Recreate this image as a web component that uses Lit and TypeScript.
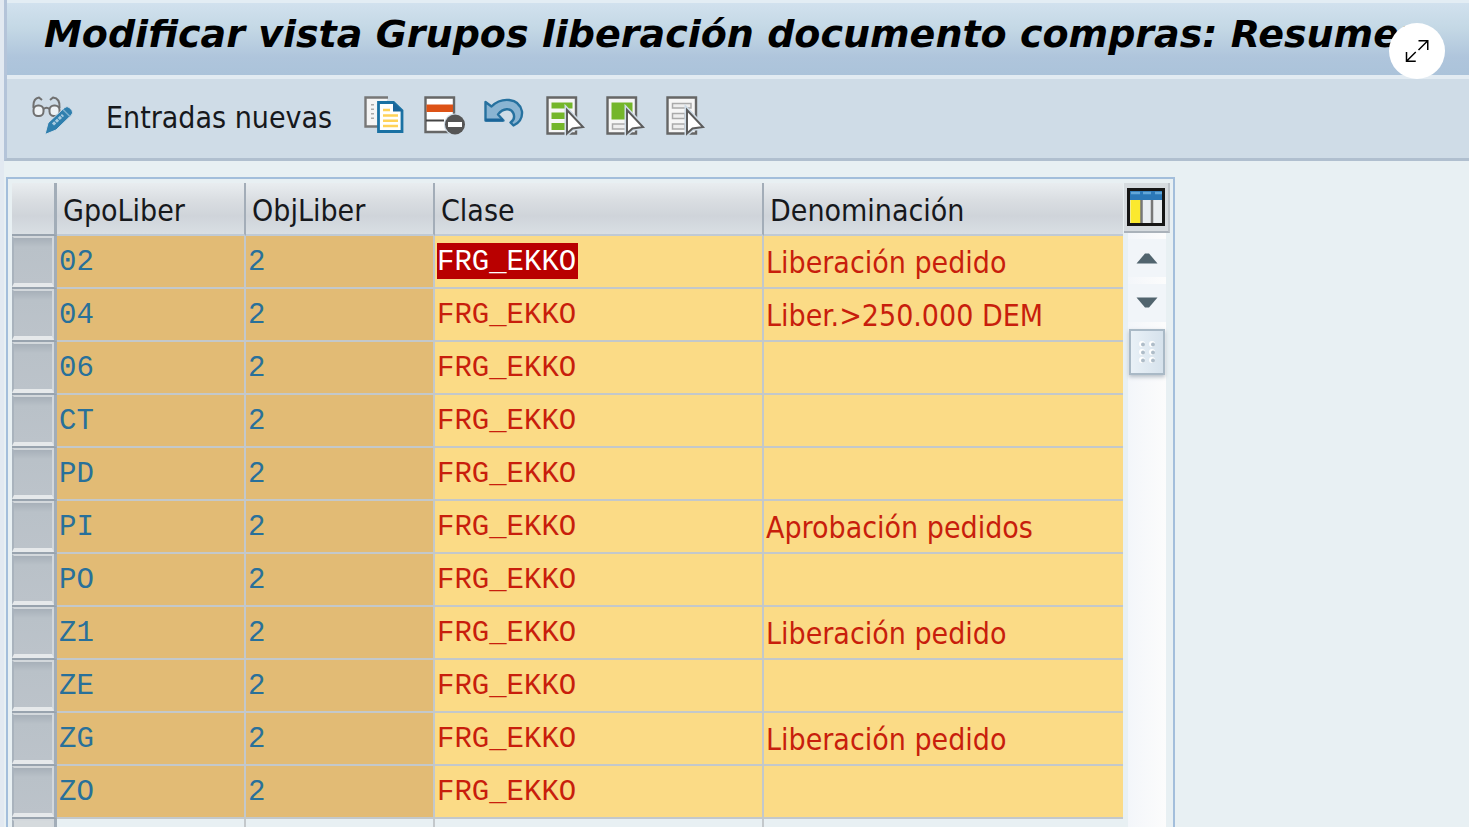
import { LitElement, html, css, svg } from "lit";
import { customElement, state } from "lit/decorators.js";

interface ReleaseGroup {
  group: string;
  object: string;
  cls: string;
  text: string;
}

const GROUPS: ReleaseGroup[] = [
  ["02", "Liberación pedido"],
  ["04", "Liber.>250.000 DEM"],
  ["06", ""],
  ["CT", ""],
  ["PD", ""],
  ["PI", "Aprobación pedidos"],
  ["PO", ""],
  ["Z1", "Liberación pedido"],
  ["ZE", ""],
  ["ZG", "Liberación pedido"],
  ["ZO", ""],
].map(([group, text]) => ({ group, object: "2", cls: "FRG_EKKO", text }));

const cursor = svg`<path d="M21 14V37.5L26.5 32.5L37 31Z" fill="#fff" stroke="#cfdce7" stroke-width="5"/>
  <path d="M21 14V37.5L26.5 32.5L37 31Z" fill="#fff" stroke="#5c5c5c" stroke-width="2"/>`;
const sheet = svg`<path d="M1.5 1.5H30V37.5H1.5Z" fill="#f6f6f6" stroke="#666" stroke-width="2.4"/>`;

const icons = {
  toggle: svg`<svg viewBox="0 0 42 40" width="42" height="40">
    <g fill="none" stroke="#707070" stroke-width="2">
      <path d="M1.500 12C1 6 3 2 7 1.500L10 4"/><path d="M27.500 12C28 6 26 2 21 1.500L18 4"/>
      <rect x="1.500" y="9.500" width="10" height="10.500" rx="4.500" fill="#eef2f5"/>
      <rect x="17.500" y="9.500" width="10" height="10.500" rx="4.500" fill="#eef2f5"/>
      <path d="M11.500 13Q14.500 10.500 17.500 13"/>
    </g>
    <path d="M13 38.500L16 27L32 12Q35 9 38 12L40 14.500Q41.500 17 39.500 19L24 34Z" fill="#2f7fae" stroke="#cfdce7" stroke-width="1"/>
    <path d="M31 13.500L38 20.500" stroke="#7db0cf" stroke-width="1.500"/>
    <path d="M21 28.500L31 19" stroke="#a9cbe0" stroke-width="3" stroke-dasharray="3 1"/>
  </svg>`,
  copy: svg`<svg viewBox="0 0 40 40" width="40" height="40">
    <path d="M24 1.500H1.500V30.500H14" fill="#f5f5f5" stroke="#777" stroke-width="2.400"/>
    <path d="M8.500 8V26" stroke="#aaa" stroke-width="3" stroke-dasharray="1.500 3"/>
    <path d="M14.500 6.500H29.500L38 14.500V35.500H14.500Z" fill="#fff" stroke="#1a71a3" stroke-width="2.800"/>
    <path d="M29 6V15.500H38.500Z" fill="#1a659a"/>
    <path d="M19 14H26M19 19.500H34M19 24.800H34M19 30H34" stroke="#ffd258" stroke-width="2.600"/>
  </svg>`,
  remove: svg`<svg viewBox="0 0 42 40" width="42" height="40">
    <path d="M1.500 1.500H30V36H1.500Z" fill="#fff" stroke="#666" stroke-width="2.400"/>
    <path d="M2.500 8.500H29V16H2.500Z" fill="#dd5216"/>
    <path d="M2 24.500H20" stroke="#444" stroke-width="2"/>
    <circle cx="31" cy="28.500" r="11" fill="#cfdce7"/>
    <circle cx="31" cy="28.500" r="10" fill="#555"/>
    <rect x="24" y="26" width="14" height="5" fill="#fff"/>
  </svg>`,
  undo: svg`<svg viewBox="3 0 40 40" width="40" height="40" overflow="visible">
    <path d="M2.500 6V24.500H20.500L15 18.500C20 12 28 11.500 30.500 17.500C32 22 31 24.500 27.500 26.500L30.500 29.500C37 26.500 39.500 21.500 39 15.500C36 1 18 1 8.500 10.500Z" fill="#8ab4d2" stroke="#26719f" stroke-width="2.400" stroke-linejoin="round"/>
    <path d="M2.500 24H20" stroke="#1a659a" stroke-width="3"/>
  </svg>`,
  selectAll: svg`<svg viewBox="0 0 40 40" width="40" height="40">${sheet}
    <path d="M5.500 6.500H26.500V12.500H5.500ZM5.500 16.500H26V23H5.500ZM5.500 27H26V34H5.500Z" fill="#74b62a"/>${cursor}</svg>`,
  selectBlock: svg`<svg viewBox="0 0 40 40" width="40" height="40">${sheet}
    <path d="M5.500 6.500H26.500V23.500H5.500Z" fill="#74b62a"/>
    <path d="M6.500 28H20V33H6.500Z" fill="#eee" stroke="#aaa" stroke-width="1.500"/>${cursor}</svg>`,
  deselect: svg`<svg viewBox="0 0 40 40" width="40" height="40">${sheet}
    <path d="M6.500 7.500H25V12H6.500ZM6.500 17.500H19V22.500H6.500ZM6.500 28H19V33H6.500Z" fill="#eee" stroke="#aaa" stroke-width="1.500"/>${cursor}</svg>`,
  columns: svg`<svg viewBox="0 0 38 38" width="38" height="38">
    <path d="M1.500 1.500H36.500V36.500H1.500Z" fill="#e9edf0" stroke="#161616" stroke-width="3"/>
    <path d="M3 3H35V12H3Z" fill="#2b78b8"/>
    <path d="M4 5H13M16 5H24M28 5H35" stroke="#62a6d8" stroke-width="2.500"/>
    <path d="M3.500 12H14V35H3.500Z" fill="#fbe92e"/>
    <path d="M14.500 12V35M25 12V35" stroke="#777" stroke-width="2.500"/>
  </svg>`,
  up: svg`<svg viewBox="0 0 22 12" width="22" height="12"><path d="M0.500 11.500L9 1.500H13L21.500 11.500Z" fill="#51646e"/></svg>`,
  down: svg`<svg viewBox="0 0 22 12" width="22" height="12"><path d="M0.500 0.500L9 10.500H13L21.500 0.500Z" fill="#51646e"/></svg>`,
  grip: svg`<svg viewBox="0 0 18 24" width="18" height="24">
    <g fill="#fff"><circle cx="4" cy="4" r="3"/><circle cx="14" cy="4" r="3"/><circle cx="4" cy="12" r="3"/><circle cx="14" cy="12" r="3"/><circle cx="4" cy="20" r="3"/><circle cx="14" cy="20" r="3"/></g>
    <g fill="#aebcc8"><circle cx="5" cy="4.500" r="2"/><circle cx="15" cy="4.500" r="2"/><circle cx="5" cy="12.500" r="2"/><circle cx="15" cy="12.500" r="2"/><circle cx="5" cy="20.500" r="2"/><circle cx="15" cy="20.500" r="2"/></g>
  </svg>`,
  expand: svg`<svg viewBox="0 0 24 24" width="24" height="24" fill="none" stroke="#000" stroke-width="1.500">
    <path d="M13.500 1.750H22.750V11M22.750 1.750L13.500 11M1.500 13V22.250H10.750M1.500 22.250L10.750 13"/>
  </svg>`,
};

@customElement("app-root")
export class AppRoot extends LitElement {
  @state() private selected = 0;

  static styles = css`
    :host {
      display: block;
      box-sizing: border-box;
      height: 100vh;
      padding: 0 3px 5px 0;
      background: #fff;
      font: 30px/36px "DejaVu Sans Condensed", "DejaVu Sans", sans-serif;
      color: #16181c;
    }
    .screen {
      position: relative;
      box-sizing: border-box;
      height: 100%;
      overflow: hidden;
      background: #e8f0f3;
      border-left: 4px solid #e2e9f1;
    }
    button {
      margin: 0;
      padding: 0;
      border: 0;
      background: none;
      font: inherit;
      color: inherit;
      cursor: pointer;
    }
    svg {
      display: block;
    }
    .top {
      border-left: 3px solid #b4c4d9;
      border-bottom: 3px solid #b0bfcf;
    }
    .titlebar {
      box-sizing: border-box;
      height: 79px;
      padding: 9px 37px 0;
      border-top: 3px solid #e3edf4;
      border-bottom: 4px solid #e2ebf2;
      background: linear-gradient(#d1e1ee, #c4d8e5 35%, #afc5dc 75%, #abc3da);
    }
    .title {
      margin: 0;
      font-family: "DejaVu Sans", sans-serif;
      font-size: 38px;
      line-height: 44px;
      font-weight: bold;
      font-style: italic;
      color: #000;
      white-space: nowrap;
    }
    .toolbar {
      display: flex;
      align-items: center;
      gap: 20px;
      box-sizing: border-box;
      height: 79px;
      padding: 0 25px 6px;
      background: #cfdce7;
    }
    .entries {
      padding: 4px 12px 0;
      white-space: nowrap;
    }
    .expand {
      position: absolute;
      top: 23px;
      right: 24px;
      display: grid;
      place-items: center;
      width: 56px;
      height: 56px;
      border-radius: 50%;
      background: #fff;
    }
    .panel {
      display: flex;
      box-sizing: border-box;
      width: calc(80% - 3px);
      margin: 16px 0 0 2px;
      padding: 4px 2px 0 4px;
      border: 2px solid #a3bedb;
      border-bottom: 0;
    }
    .grid {
      flex: 1;
      min-width: 0;
      table-layout: fixed;
      border-collapse: separate;
      border-spacing: 0;
    }
    .c-mark {
      width: 45px;
    }
    .c-key {
      width: 189px;
    }
    .c-class {
      width: 329px;
    }
    th,
    td {
      box-sizing: border-box;
      height: 53px;
      padding: 2px 0 0 2px;
      text-align: left;
      font-weight: normal;
      white-space: nowrap;
      border-right: 2px solid #c3c8cb;
      border-bottom: 2px solid #c3c8cb;
    }
    th {
      padding: 4px 0 0 6px;
      background: linear-gradient(#e9edf0, #d9dde1 35%, #cfd4da 65%, #d9dfe3);
      border-right-color: #a3adb8;
      border-bottom-color: #c0cad4;
    }
    th:last-child,
    td:last-child {
      border-right: 0;
    }
    .mark {
      padding: 0;
      border-right: 3px solid #a2adb8;
      border-bottom-color: #98a3ae;
    }
    .mark button {
      display: block;
      box-sizing: border-box;
      width: 100%;
      height: 51px;
      border: 2px solid #d3d8dc;
      border-left-color: #a9b3bd;
      border-bottom: 4px solid #e6e9eb;
      background: linear-gradient(#a7b0b9, #b9c1c8 20%, #bcc3ca);
    }
    .key {
      background: #e2bb75;
      color: #28709a;
    }
    .value {
      background: #fbdb86;
      color: #c81e0c;
    }
    .code {
      font-family: "Liberation Mono", monospace;
      font-size: 29px;
    }
    .picked {
      padding: 3px 2px 0 0;
      background: #b90000;
      color: #fff;
    }
    .blank td {
      background: #e8f0f3;
    }
    .blank button {
      background: #d5dadd;
    }
    .side {
      display: flex;
      flex-direction: column;
      align-items: center;
      width: 48px;
    }
    .settings {
      display: grid;
      place-items: center;
      width: 46px;
      height: 50px;
      background: #d6dbdf;
      border-right: 2px solid #bcc2c8;
      border-bottom: 2px solid #aab2ba;
      box-sizing: border-box;
    }
    .scroll {
      flex: 1;
      display: flex;
      flex-direction: column;
      align-items: center;
      gap: 7px;
      box-sizing: border-box;
      width: 38px;
      padding-top: 6px;
      background: linear-gradient(90deg, #f3f6fa, #fcfcfc);
    }
    .arrow {
      display: grid;
      place-items: center;
      width: 38px;
      height: 38px;
      background: #f1f5f9;
    }
    .thumb {
      display: grid;
      place-items: center;
      box-sizing: border-box;
      width: 36px;
      height: 46px;
      border: 2px solid #a9b9c6;
      background: linear-gradient(90deg, #e9f1f7, #d6e2ec);
      box-shadow: 0 2px 4px #b5bec6;
    }
  `;

  private iconButton(label: string, icon: unknown) {
    return html`<button type="button" aria-label=${label}>${icon}</button>`;
  }

  render() {
    return html`
      <main class="screen">
        <header class="top">
          <div class="titlebar">
            <h1 class="title">Modificar vista Grupos liberación documento compras: Resumen</h1>
          </div>
          <nav class="toolbar" aria-label="Funciones">
            ${this.iconButton("Visualizar o modificar", icons.toggle)}
            <button type="button" class="entries">Entradas nuevas</button>
            ${this.iconButton("Copiar como", icons.copy)}
            ${this.iconButton("Borrar", icons.remove)}
            ${this.iconButton("Deshacer", icons.undo)}
            ${this.iconButton("Marcar todo", icons.selectAll)}
            ${this.iconButton("Marcar bloque", icons.selectBlock)}
            ${this.iconButton("Desmarcar todo", icons.deselect)}
          </nav>
        </header>
        <section class="panel">
          <table class="grid">
            <colgroup>
              <col class="c-mark" />
              <col class="c-key" />
              <col class="c-key" />
              <col class="c-class" />
              <col />
            </colgroup>
            <thead>
              <tr>
                <th class="mark"></th>
                <th scope="col">GpoLiber</th>
                <th scope="col">ObjLiber</th>
                <th scope="col">Clase</th>
                <th scope="col">Denominación</th>
              </tr>
            </thead>
            <tbody>
              ${GROUPS.map(
                (row, i) => html`<tr>
                  <td class="mark">
                    <button type="button" aria-label="Marcar ${row.group}" @click=${() => (this.selected = i)}></button>
                  </td>
                  <td class="key code">${row.group}</td>
                  <td class="key code">${row.object}</td>
                  <td class="value code">
                    <span class=${i === this.selected ? "picked" : ""}>${row.cls}</span>
                  </td>
                  <td class="value">${row.text}</td>
                </tr>`
              )}
              <tr class="blank">
                <td class="mark"><button type="button" aria-label="Marcar fila vacía"></button></td>
                <td></td>
                <td></td>
                <td></td>
                <td></td>
              </tr>
            </tbody>
          </table>
          <div class="side">
            <button type="button" class="settings" aria-label="Configuración de tabla">${icons.columns}</button>
            <div class="scroll">
              <button type="button" class="arrow" aria-label="Subir">${icons.up}</button>
              <button type="button" class="arrow" aria-label="Bajar">${icons.down}</button>
              <button type="button" class="thumb" aria-label="Desplazar">${icons.grip}</button>
            </div>
          </div>
        </section>
        <button type="button" class="expand" aria-label="Ampliar">${icons.expand}</button>
      </main>
    `;
  }
}
